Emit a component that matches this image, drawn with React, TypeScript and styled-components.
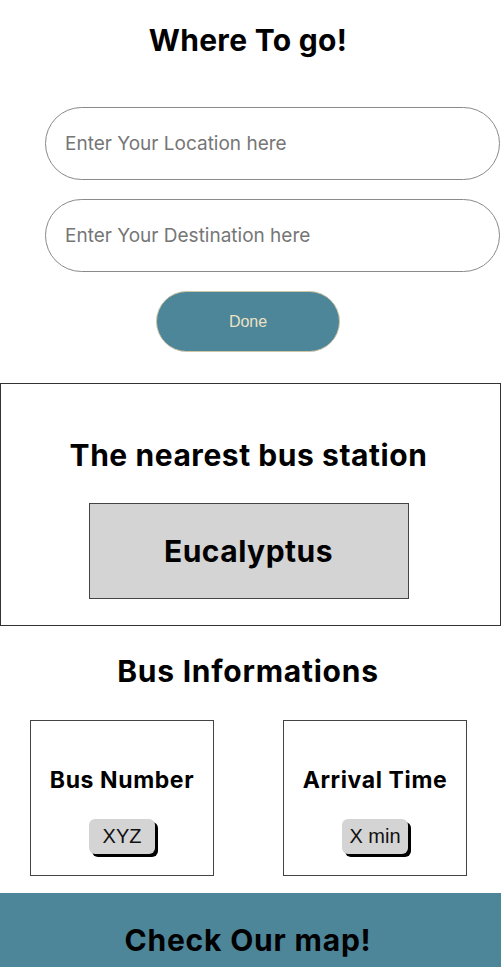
import React from "react";
import styled, { createGlobalStyle } from "styled-components";

const Global = createGlobalStyle`
  html, body { margin: 0; padding: 0; background: #fff; }
  body { font-family: "Inter", "Noto Sans", sans-serif; overflow: hidden; }
  * { box-sizing: border-box; }
`;

const Page = styled.div`
  display: flex;
  flex-direction: column;
  width: 501px;
`;

const Header = styled.section`
  display: flex;
  flex-direction: column;
  align-items: center;
  padding: 22px 5px 0 0;
`;

const Title = styled.h1<{ $size?: number; $ls?: number }>`
  margin: 0;
  font-family: "Inter", sans-serif;
  font-weight: 700;
  font-size: ${(p) => p.$size ?? 30}px;
  line-height: 36px;
  letter-spacing: ${(p) => p.$ls ?? 0}px;
  color: #000;
  text-align: center;
`;

const Form = styled.div`
  display: flex;
  flex-direction: column;
  align-items: center;
  gap: 19px;
  margin-top: 49px;
  width: 100%;
`;

const Field = styled.input`
  align-self: stretch;
  margin: 0 -4px 0 45px;
  height: 73px;
  border: 1px solid #8a8a8a;
  border-radius: 37px;
  padding: 0 19px;
  font-family: "Inter", sans-serif;
  font-size: 19px;
  color: #333;
  background: #fff;
  outline: none;
  &::placeholder { color: #767676; }
`;

const DoneButton = styled.button`
  width: 184px;
  height: 61px;
  border-radius: 31px;
  border: 1px solid #cfc6a8;
  background: #4d8599;
  color: #ece2c4;
  font-family: "Liberation Sans", Arial, sans-serif;
  font-size: 16px;
`;

const StationBox = styled.section`
  margin-top: 31px;
  height: 243px;
  border: 1px solid #333;
  display: flex;
  flex-direction: column;
  align-items: center;
  padding: 53px 4px 0 0;
`;

const StationName = styled.div`
  margin-top: 30px;
  width: 320px;
  height: 96px;
  background: #d4d4d4;
  border: 1px solid #444;
  display: flex;
  align-items: center;
  justify-content: center;
  font-family: "Inter", sans-serif;
  font-weight: 700;
  font-size: 30px;
  letter-spacing: 0.5px;
  color: #000;
`;

const InfoSection = styled.section`
  display: flex;
  flex-direction: column;
  align-items: center;
  padding: 27px 5px 0 0;
`;

const Cards = styled.div`
  margin-top: 31px;
  display: flex;
  justify-content: space-between;
  width: 437px;
  align-self: flex-start;
  margin-left: 30px;
`;

const Card = styled.div`
  width: 184px;
  height: 156px;
  border: 1px solid #444;
  display: flex;
  flex-direction: column;
  align-items: center;
  padding-top: 47px;
`;

const CardTitle = styled.h3`
  margin: 0;
  font-family: "Inter", sans-serif;
  font-weight: 700;
  font-size: 23px;
  line-height: 25px;
  letter-spacing: 0.6px;
  color: #000;
`;

const ValueChip = styled.div`
  margin-top: 26px;
  width: 66px;
  height: 35px;
  border-radius: 6px;
  background: #d4d4d4;
  box-shadow: 3px 3px 0 #000;
  display: flex;
  align-items: center;
  justify-content: center;
  font-family: "Liberation Sans", Arial, sans-serif;
  font-size: 20px;
  color: #111;
`;

const Footer = styled.footer`
  margin-top: 17px;
  height: 110px;
  background: #4d8599;
  display: flex;
  justify-content: center;
  padding: 29px 5px 0 0;
`;

export default function App() {
  return (
    <>
      <Global />
      <Page>
        <Header>
          <Title $size={30} $ls={0.3}>Where To go!</Title>
          <Form>
            <Field placeholder="Enter Your Location here" />
            <Field placeholder="Enter Your Destination here" />
            <DoneButton>Done</DoneButton>
          </Form>
        </Header>
        <StationBox>
          <Title $size={30} $ls={0.55}>The nearest bus station</Title>
          <StationName>Eucalyptus</StationName>
        </StationBox>
        <InfoSection>
          <Title $size={30} $ls={0.75}>Bus Informations</Title>
          <Cards>
            <Card>
              <CardTitle>Bus Number</CardTitle>
              <ValueChip>XYZ</ValueChip>
            </Card>
            <Card>
              <CardTitle>Arrival Time</CardTitle>
              <ValueChip>X min</ValueChip>
            </Card>
          </Cards>
        </InfoSection>
        <Footer>
          <Title $size={30} $ls={0.8}>Check Our map!</Title>
        </Footer>
      </Page>
    </>
  );
}
